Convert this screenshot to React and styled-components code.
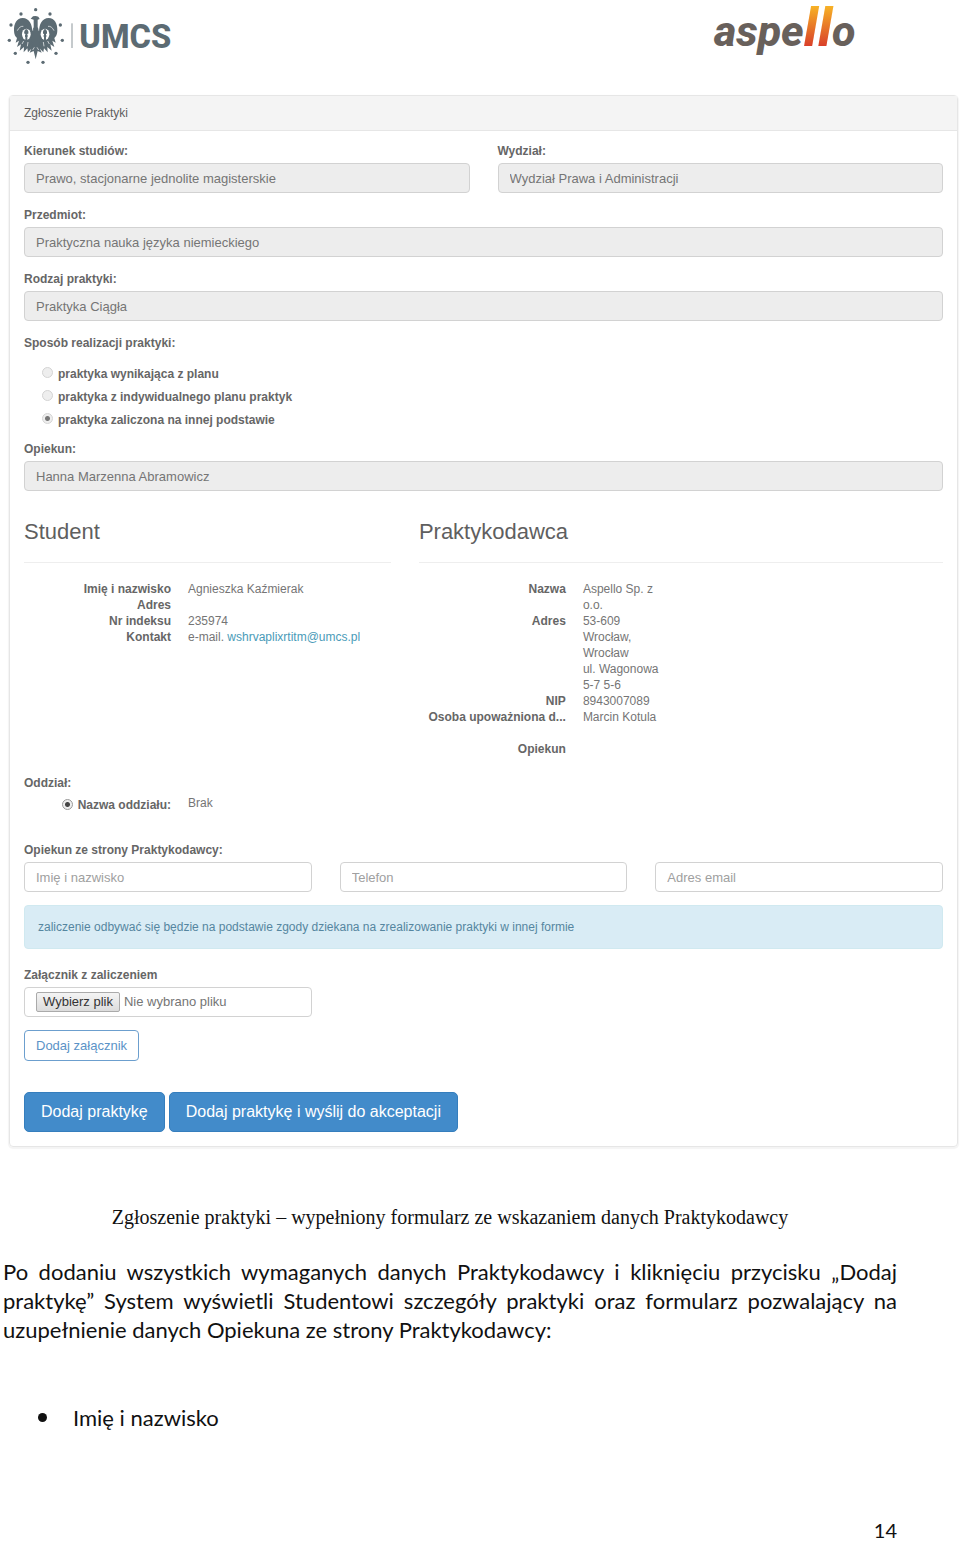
import React from 'react';
import styled, { createGlobalStyle } from 'styled-components';

const GlobalStyle = createGlobalStyle`
  * {
    box-sizing: border-box;
  }

  body {
    margin: 0;
    background: #fff;
    color: #5f5f5f;
    font-family: "Liberation Sans", Arial, sans-serif;
    font-size: 12px;
    line-height: 16px;
  }
`;

const Page = styled.div`
  padding: 0 2px 0 9px;
`;

const Header = styled.header`
  display: flex;
  justify-content: space-between;
  height: 95px;
  padding-right: 96px;
`;

const Logo = styled.svg`
  display: block;
  height: 75px;
  overflow: visible;
`;

const LogoText = styled.text`
  font-family: Roboto, sans-serif;
  font-weight: 800;
`;

const Panel = styled.section`
  border: 1px solid #e6e6e6;
  border-radius: 4px;
  box-shadow: 0 1px 1px 1px #f4f4f4;
`;

const PanelTitle = styled.h1`
  margin: 0;
  padding: 9px 14px;
  border-bottom: 1px solid #e6e6e6;
  background: #f4f4f4;
  font-size: 12px;
  font-weight: normal;
  line-height: 16px;
`;

const Form = styled.form`
  padding: 11px 14px 14px;
`;

const Columns = styled.div`
  display: grid;
  grid-template-columns: ${props => props.$template};
  column-gap: 28px;
`;

const Group = styled.div`
  margin-bottom: 13px;
`;

const Label = styled.label`
  display: block;
  margin-bottom: 3px;
  padding: 0;
  color: #666;
  font-weight: bold;
  line-height: 18px;
`;

const Input = styled.input`
  display: block;
  width: 100%;
  height: 30px;
  padding: 0 11px;
  border: 1px solid #d2d2d2;
  border-radius: 4px;
  background: #fff;
  color: #757575;
  font: inherit;
  font-size: 13px;

  &:disabled {
    background: #ededed;
  }

  &::placeholder {
    color: #a0a0a0;
    opacity: 1;
  }
`;

const Options = styled.fieldset`
  margin: 0 0 8px;
  padding: 0;
  border: 0;
`;

const Legend = styled.legend`
  margin-bottom: 11px;
  padding: 0;
  color: #666;
  font-weight: bold;
  line-height: 18px;
`;

const Option = styled.label`
  display: flex;
  gap: 5px;
  padding-left: 18px;
  color: #666;
  font-weight: bold;
  line-height: 23px;
`;

const Radio = styled.input.attrs({ type: 'radio' })`
  appearance: none;
  flex: none;
  width: 11px;
  height: 11px;
  margin: 4px 0 0;
  border: 1px solid #999;
  border-radius: 50%;
  background: #eee;

  &:checked {
    background: radial-gradient(circle, #444 0 2px, #eee 3px);
  }

  &:disabled {
    border-color: #d4d4d4;
  }

  &:disabled:checked {
    background: radial-gradient(circle, #777 0 2px, #eee 3px);
  }
`;

const SectionTitle = styled.h2`
  margin: 15px 0 18px;
  padding-bottom: 17px;
  border-bottom: 1px solid #eee;
  font-size: 22px;
  font-weight: normal;
  line-height: 26px;
`;

const Details = styled.dl`
  display: grid;
  grid-template-columns: 147px 1fr;
  column-gap: 17px;
  max-width: ${props => props.$narrow ? '244px' : 'none'};
  margin: 0;
`;

const Term = styled.dt`
  color: #666;
  font-weight: bold;
  text-align: right;
  white-space: nowrap;
`;

const Value = styled.dd`
  min-height: 16px;
  margin: 0;
  color: #757575;

  &:nth-last-of-type(2) {
    margin-bottom: ${props => props.$spaced ? '16px' : '0'};
  }
`;

const Mail = styled.a`
  color: #4a9bb8;
  text-decoration: none;
`;

const Branch = styled.fieldset`
  margin: 17px 0 25px;
  padding: 0;
  border: 0;
`;

const BranchRow = styled.div`
  display: grid;
  grid-template-columns: 147px 1fr;
  column-gap: 17px;
  color: #757575;
`;

const BranchOption = styled.label`
  display: flex;
  justify-content: flex-end;
  gap: 5px;
  color: #666;
  font-weight: bold;
  line-height: 21px;
`;

const Alert = styled.div`
  margin-bottom: 17px;
  padding: 13px;
  border: 1px solid #d0e9f0;
  border-radius: 4px;
  background: #d9ecf5;
  color: #5586a0;
`;

const FileField = styled.label`
  display: flex;
  align-items: center;
  gap: 4px;
  height: 30px;
  padding: 0 11px;
  border: 1px solid #d2d2d2;
  border-radius: 4px;
  color: #757575;
  font-size: 13px;
`;

const HiddenFile = styled.input`
  position: absolute;
  width: 1px;
  height: 1px;
  opacity: 0;
`;

const FileButton = styled.span`
  padding: 1px 6px;
  border: 1px solid #aaa;
  border-radius: 2px;
  background: linear-gradient(#f4f4f4, #dcdcdc);
  color: #333;
`;

const OutlineButton = styled.button`
  display: block;
  height: 31px;
  padding: 0 11px;
  border: 1px solid #6c9fce;
  border-radius: 4px;
  background: #fff;
  color: #5b93c7;
  font: inherit;
  font-size: 13px;
`;

const Actions = styled.div`
  display: flex;
  gap: 4px;
  margin-top: 31px;
`;

const PrimaryButton = styled.button`
  height: 40px;
  padding: 0 16px;
  border: 1px solid #357ebd;
  border-radius: 5px;
  background: #428bca;
  color: #fff;
  font: inherit;
  font-size: 16px;
`;

const Caption = styled.p`
  margin: 57px 60px 0 0;
  color: #111;
  font-family: "Liberation Serif", "Times New Roman", serif;
  font-size: 20px;
  line-height: 26px;
  text-align: center;
`;

const Prose = styled.div`
  padding: 0 63px 0 3px;
  color: #111;
  font-family: Lato, Carlito, sans-serif;
  font-size: 22px;
  line-height: 29px;
`;

const Paragraph = styled.p`
  margin: 27px 0 59px;
  text-align: justify;
`;

const List = styled.ul`
  margin: 0;
  padding-left: 70px;
  list-style: none;
`;

const ListItem = styled.li`
  display: flex;
  align-items: center;

  &::before {
    content: '';
    width: 9px;
    height: 9px;
    margin: 0 26px 0 -35px;
    border-radius: 50%;
    background: #111;
  }
`;

const PageNumber = styled.footer`
  margin-top: 88px;
  font-size: 20px;
  line-height: 20px;
  text-align: right;
`;

const dots = [
  [107, 29], [63, 42], [150, 42], [33, 75], [181, 75], [28, 121],
  [187, 121], [46, 160], [168, 160], [84, 187], [129, 187],
];

const Wing = () => (
  <>
    <path
      fill="#5c6b73"
      d="M97 98 C97 72 88 55 68 54 C50 54 41 72 42 92 C42 102 46 110 51 114 L47 128 L57 122 L51 141 L63 133 L59 152 L72 141 L71 157 L82 145 L84 157 L94 146 L100 152 L100 92 Z"
    />
    <ellipse cx="79" cy="103" rx="13" ry="17" fill="#fff" />
    <path stroke="#5c6b73" strokeWidth="6" d="M79 88 V124 M73 98 H85 M75 108 H83" />
    <circle cx="79" cy="95" r="6" fill="#5c6b73" />
    <path stroke="#fff" strokeWidth="2" fill="none" d="M52 92 C57 82 63 78 70 79 M66 132 L71 123 M82 139 L84 126" />
  </>
);

const UmcsLogo = () => (
  <Logo viewBox="27 0 540 225" width="180" role="img" aria-label="UMCS">
    {dots.map(([x, y]) => <circle key={`${x}-${y}`} cx={x} cy={y} r="5" fill="#5c6b73" />)}
    <Wing />
    <g transform="matrix(-1 0 0 1 214 0)"><Wing /></g>
    <path fill="#5c6b73" d="M92 56 L99 49 Q107 46 115 50 L119 57 L113 59 V82 Q121 91 119 110 L117 139 L125 158 L113 153 L107 178 L101 153 L89 158 L97 139 L95 110 Q93 91 101 82 V59 Z" />
    <path stroke="#fff" strokeWidth="2" fill="none" d="M98 70 V92 M116 70 V92 M103 142 L98 150 M111 142 L116 150" />
    <path stroke="#8b959a" strokeWidth="3" d="M216 70 V144" />
    <LogoText x="238" y="144" fontSize="98" fill="#5c6b73">UMCS</LogoText>
  </Logo>
);

const AspelloLogo = () => (
  <Logo viewBox="0 0 150 75" width="150" role="img" aria-label="aspello">
    <defs>
      <linearGradient id="flame" gradientUnits="userSpaceOnUse" x1="0" y1="6" x2="0" y2="46">
        <stop offset="0" stopColor="#f7b226" />
        <stop offset="1" stopColor="#d9402a" />
      </linearGradient>
    </defs>
    <LogoText x="2" y="46" fontSize="43" fontStyle="italic" fill="#68605b">
      aspe<tspan fontSize="54" fill="url(#flame)">ll</tspan>o
    </LogoText>
  </Logo>
);

const Field = ({ id, label, value }) => (
  <Group>
    <Label htmlFor={id}>{label}</Label>
    <Input id={id} value={value} disabled readOnly />
  </Group>
);

const options = [
  'praktyka wynikająca z planu',
  'praktyka z indywidualnego planu praktyk',
  'praktyka zaliczona na innej podstawie',
];

const App = () => {
  return (
    <>
      <GlobalStyle />
      <Page>
        <Header>
          <UmcsLogo />
          <AspelloLogo />
        </Header>
        <Panel>
          <PanelTitle>Zgłoszenie Praktyki</PanelTitle>
          <Form onSubmit={e => e.preventDefault()}>
            <Columns $template="1fr 1fr">
              <Field id="course" label="Kierunek studiów:" value="Prawo, stacjonarne jednolite magisterskie" />
              <Field id="faculty" label="Wydział:" value="Wydział Prawa i Administracji" />
            </Columns>
            <Field id="subject" label="Przedmiot:" value="Praktyczna nauka języka niemieckiego" />
            <Field id="kind" label="Rodzaj praktyki:" value="Praktyka Ciągła" />
            <Options>
              <Legend>Sposób realizacji praktyki:</Legend>
              {options.map((option, i) => (
                <Option key={option}>
                  <Radio name="mode" disabled defaultChecked={i === 2} />
                  {option}
                </Option>
              ))}
            </Options>
            <Field id="tutor" label="Opiekun:" value="Hanna Marzenna Abramowicz" />
            <Columns $template="7fr 10fr">
              <div>
                <SectionTitle>Student</SectionTitle>
                <Details>
                  <Term>Imię i nazwisko</Term>
                  <Value>Agnieszka Kaźmierak</Value>
                  <Term>Adres</Term>
                  <Value />
                  <Term>Nr indeksu</Term>
                  <Value>235974</Value>
                  <Term>Kontakt</Term>
                  <Value>e-mail. <Mail href="mailto:wshrvaplixrtitm@umcs.pl">wshrvaplixrtitm@umcs.pl</Mail></Value>
                </Details>
              </div>
              <div>
                <SectionTitle>Praktykodawca</SectionTitle>
                <Details $narrow>
                  <Term>Nazwa</Term>
                  <Value>Aspello Sp. z o.o.</Value>
                  <Term>Adres</Term>
                  <Value>53-609<br />Wrocław,<br />Wrocław<br />ul. Wagonowa<br />5-7 5-6</Value>
                  <Term>NIP</Term>
                  <Value>8943007089</Value>
                  <Term>Osoba upoważniona d...</Term>
                  <Value $spaced>Marcin Kotula</Value>
                  <Term>Opiekun</Term>
                  <Value />
                </Details>
              </div>
            </Columns>
            <Branch>
              <Label as="legend">Oddział:</Label>
              <BranchRow>
                <BranchOption>
                  <Radio name="branch" defaultChecked />
                  Nazwa oddziału:
                </BranchOption>
                <span>Brak</span>
              </BranchRow>
            </Branch>
            <Label htmlFor="guardian">Opiekun ze strony Praktykodawcy:</Label>
            <Columns $template="1fr 1fr 1fr">
              <Group><Input id="guardian" placeholder="Imię i nazwisko" /></Group>
              <Group><Input type="tel" aria-label="Telefon" placeholder="Telefon" /></Group>
              <Group><Input type="email" aria-label="Adres email" placeholder="Adres email" /></Group>
            </Columns>
            <Alert>zaliczenie odbywać się będzie na podstawie zgody dziekana na zrealizowanie praktyki w innej formie</Alert>
            <Label htmlFor="attachment">Załącznik z zaliczeniem</Label>
            <Columns $template="1fr 1fr 1fr">
              <Group>
                <FileField>
                  <HiddenFile id="attachment" type="file" />
                  <FileButton>Wybierz plik</FileButton>
                  Nie wybrano pliku
                </FileField>
              </Group>
            </Columns>
            <OutlineButton type="button">Dodaj załącznik</OutlineButton>
            <Actions>
              <PrimaryButton type="submit">Dodaj praktykę</PrimaryButton>
              <PrimaryButton type="submit">Dodaj praktykę i wyślij do akceptacji</PrimaryButton>
            </Actions>
          </Form>
        </Panel>
      </Page>
      <Caption>Zgłoszenie praktyki – wypełniony formularz ze wskazaniem danych Praktykodawcy</Caption>
      <Prose>
        <Paragraph>
          Po dodaniu wszystkich wymaganych danych Praktykodawcy i kliknięciu przycisku „Dodaj praktykę” System wyświetli Studentowi szczegóły praktyki oraz formularz pozwalający na uzupełnienie danych Opiekuna ze strony Praktykodawcy:
        </Paragraph>
        <List>
          <ListItem>Imię i nazwisko</ListItem>
        </List>
        <PageNumber>14</PageNumber>
      </Prose>
    </>
  );
};

export default App;
